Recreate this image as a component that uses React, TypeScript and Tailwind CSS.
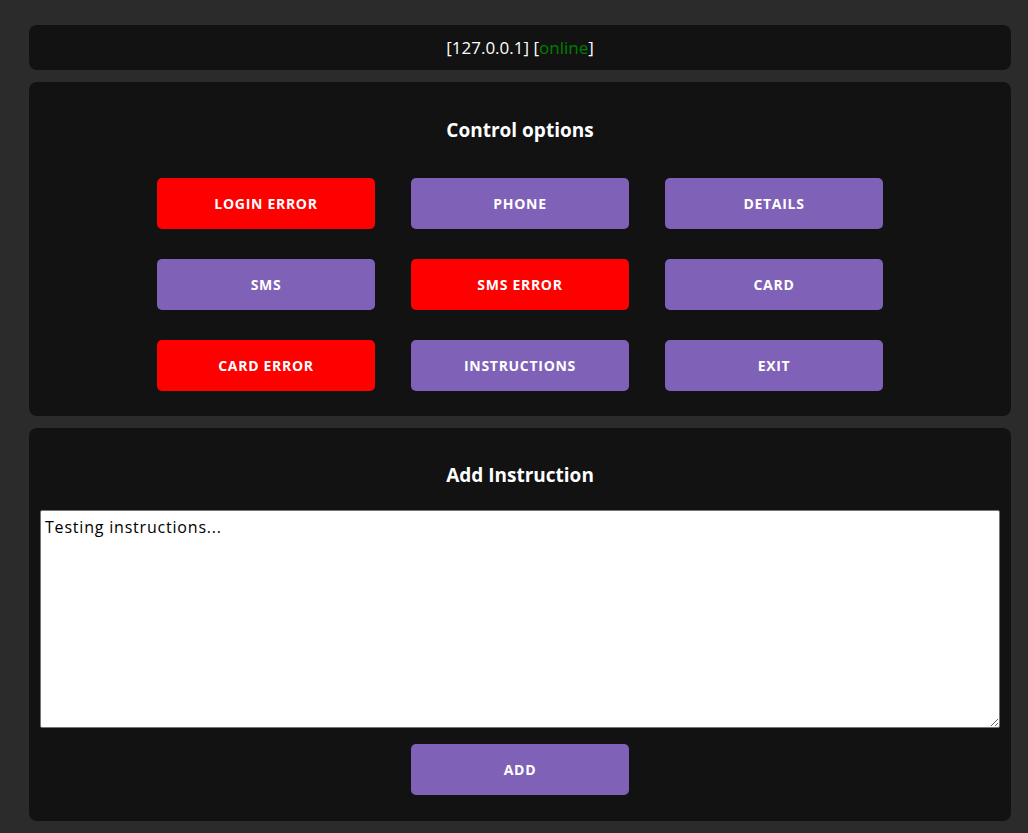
import React from "react";

const comic = "font-['Comic_Sans_MS','Open_Sans',sans-serif]";

function Btn({ label, red }: { label: string; red?: boolean }) {
  return (
    <button
      className={`h-[51px] w-[218px] rounded-[5px] text-[14px] font-bold tracking-[0.7px] text-white ${comic} ${
        red ? "bg-[#ff0000]" : "bg-[#7f62b8]"
      }`}
    >
      {label}
    </button>
  );
}

export default function App() {
  return (
    <div className="min-h-[833px] bg-[#2b2b2b] pl-[29px] pr-[17px] pt-[25px] pb-[13px]">
      <div className="flex flex-col gap-[12px]">
        <div className="flex h-[45px] items-center justify-center rounded-[8px] bg-[#121212] font-['Open_Sans',sans-serif] text-[17px] text-white">
          <span>
            [127.0.0.1] [<span className="text-[#008000]">online</span>]
          </span>
        </div>

        <div className="flex flex-col items-center rounded-[8px] bg-[#121212] pb-[25px] pt-[34px]">
          <h2 className={`text-[19px] font-bold leading-[28px] text-white ${comic}`}>Control options</h2>
          <div className="mt-[34px] grid grid-cols-[218px_218px_218px] gap-x-[36px] gap-y-[30px]">
            <Btn label="LOGIN ERROR" red />
            <Btn label="PHONE" />
            <Btn label="DETAILS" />
            <Btn label="SMS" />
            <Btn label="SMS ERROR" red />
            <Btn label="CARD" />
            <Btn label="CARD ERROR" red />
            <Btn label="INSTRUCTIONS" />
            <Btn label="EXIT" />
          </div>
        </div>

        <div className="flex flex-col items-center rounded-[8px] bg-[#121212] px-[11px] pb-[26px] pt-[33px]">
          <h2 className={`text-[19px] font-bold leading-[28px] text-white ${comic}`}>Add Instruction</h2>
          <textarea
            className={`mt-[21px] h-[218px] w-full resize-y rounded-[2px] border border-[#767676] bg-white p-[4px] text-[16px] tracking-[0.8px] text-black accent-[#7f62b8] outline-none ${comic}`}
            defaultValue="Testing instructions..."
          />
          <div className="mt-[16px]">
            <Btn label="ADD" />
          </div>
        </div>
      </div>
    </div>
  );
}
